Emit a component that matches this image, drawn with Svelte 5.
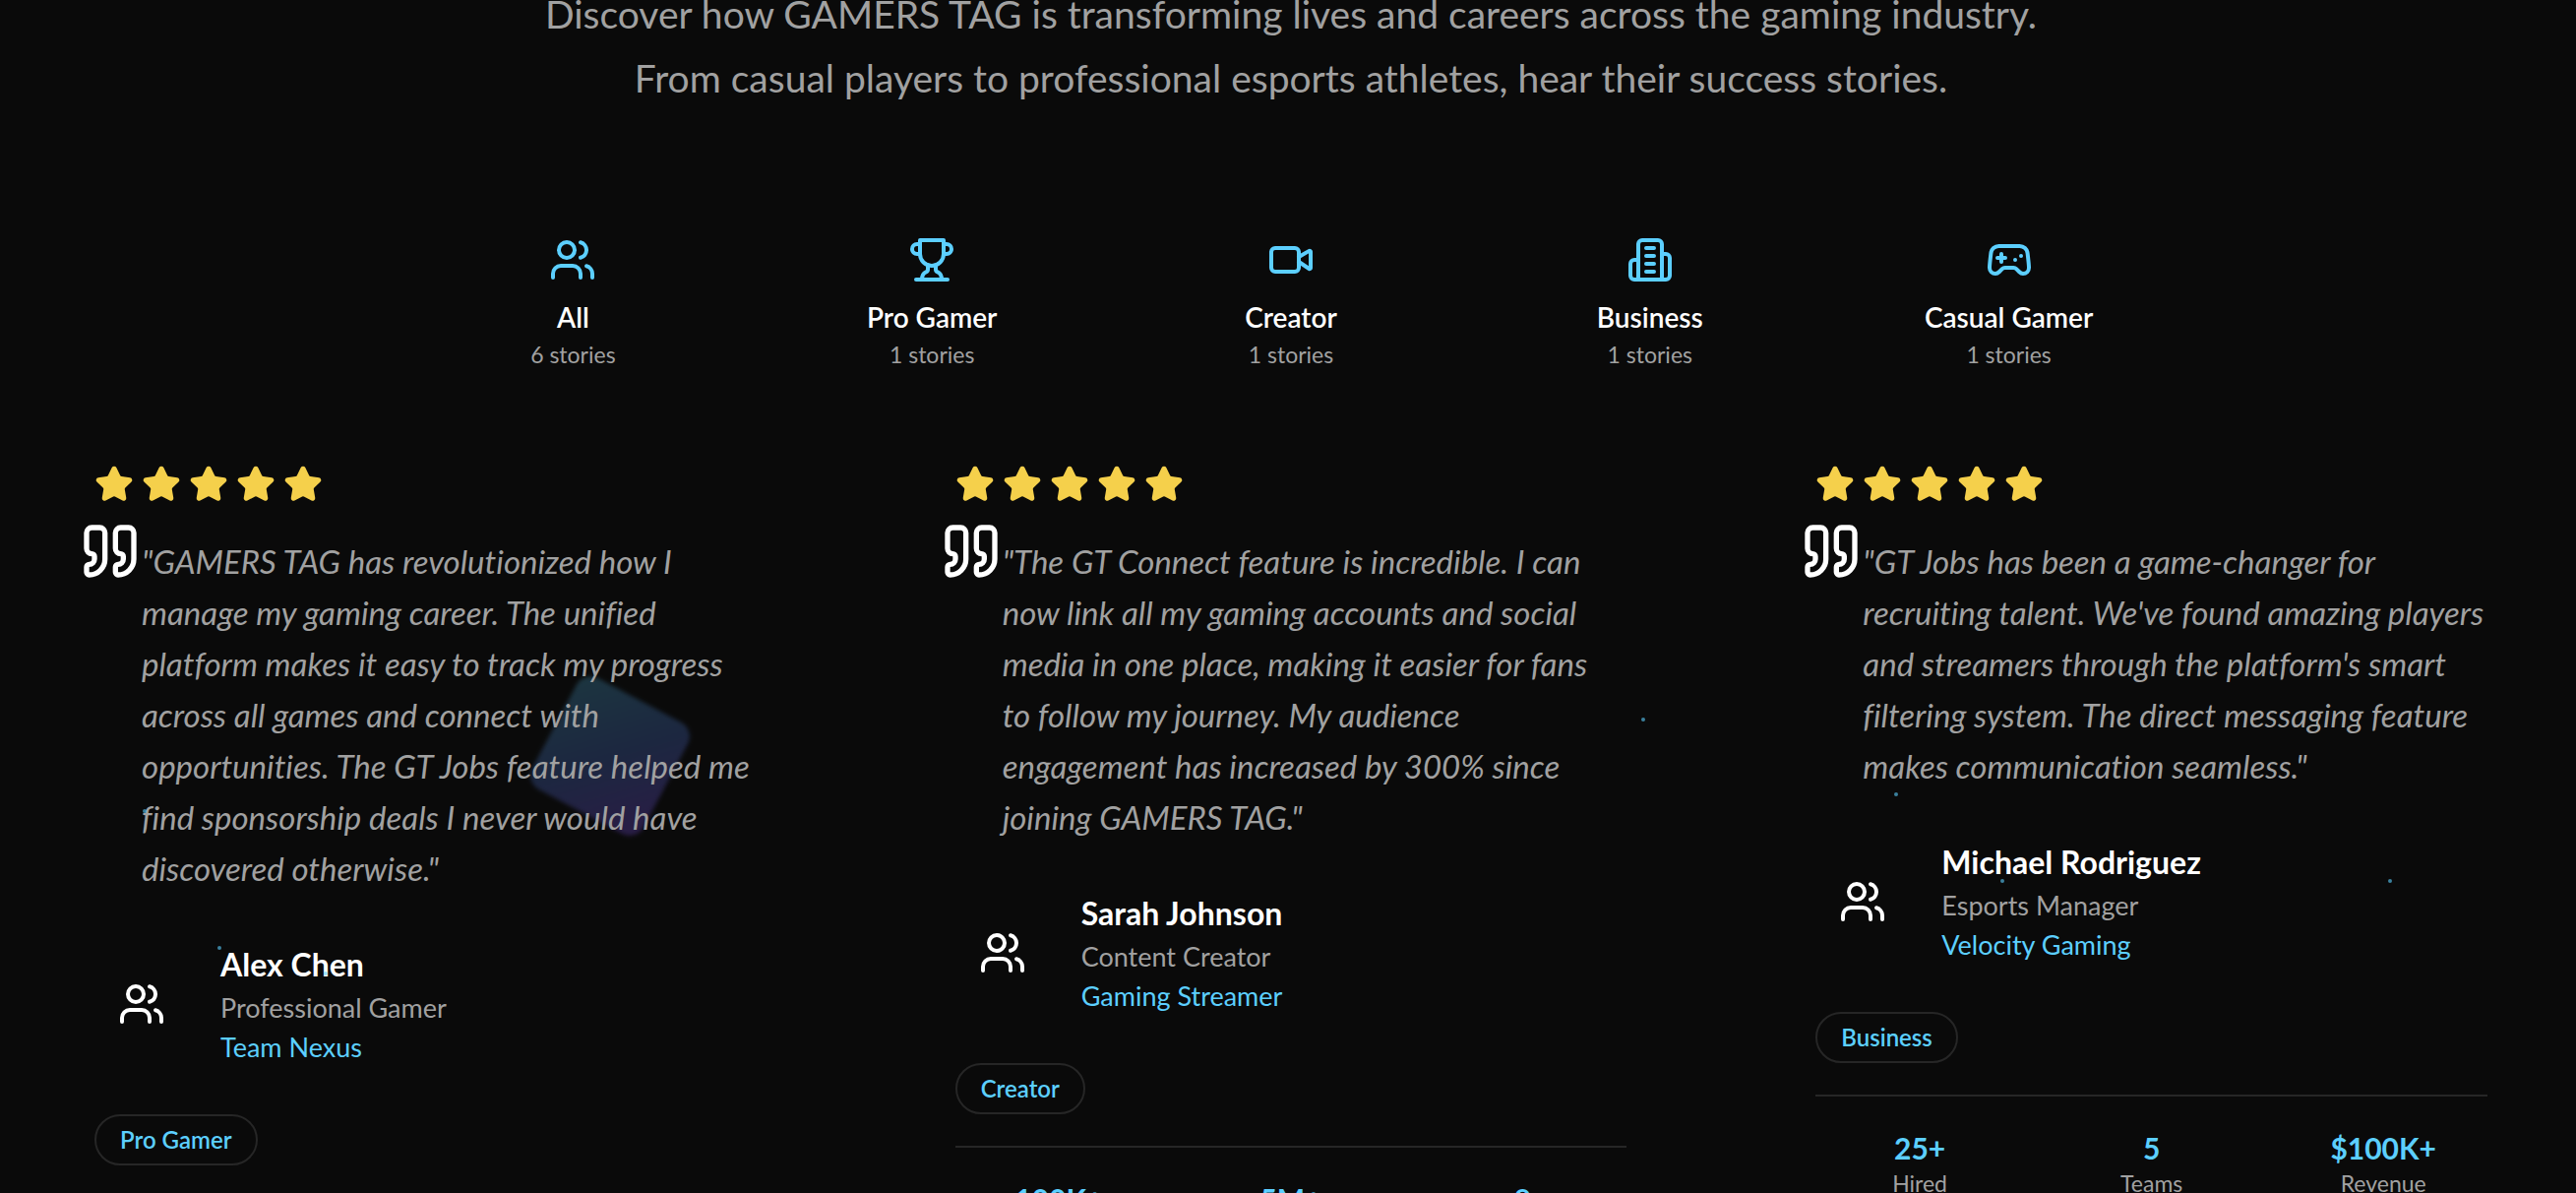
<script>
  const filters = [
    { label: 'All', count: 6, icon: 'users' },
    { label: 'Pro Gamer', count: 1, icon: 'trophy' },
    { label: 'Creator', count: 1, icon: 'video' },
    { label: 'Business', count: 1, icon: 'building' },
    { label: 'Casual Gamer', count: 1, icon: 'gamepad' }
  ];

  const stories = [
    {
      name: 'Alex Chen',
      role: 'Professional Gamer',
      org: 'Team Nexus',
      tag: 'Pro Gamer',
      lines: [
        '"GAMERS TAG has revolutionized how I',
        'manage my gaming career. The unified',
        'platform makes it easy to track my progress',
        'across all games and connect with',
        'opportunities. The GT Jobs feature helped me',
        'find sponsorship deals I never would have',
        'discovered otherwise."'
      ],
      stats: []
    },
    {
      name: 'Sarah Johnson',
      role: 'Content Creator',
      org: 'Gaming Streamer',
      tag: 'Creator',
      lines: [
        '"The GT Connect feature is incredible. I can',
        'now link all my gaming accounts and social',
        'media in one place, making it easier for fans',
        'to follow my journey. My audience',
        'engagement has increased by 300% since',
        'joining GAMERS TAG."'
      ],
      stats: [
        { value: '100K+', label: 'Followers' },
        { value: '5M+', label: 'Views' },
        { value: '8', label: 'Platforms' }
      ]
    },
    {
      name: 'Michael Rodriguez',
      role: 'Esports Manager',
      org: 'Velocity Gaming',
      tag: 'Business',
      lines: [
        '"GT Jobs has been a game-changer for',
        "recruiting talent. We've found amazing players",
        "and streamers through the platform's smart",
        'filtering system. The direct messaging feature',
        'makes communication seamless."'
      ],
      stats: [
        { value: '25+', label: 'Hired' },
        { value: '5', label: 'Teams' },
        { value: '$100K+', label: 'Revenue' }
      ]
    }
  ];

  const particles = [
    { x: 147, y: 824 },
    { x: 223, y: 963 },
    { x: 331, y: 989 },
    { x: 1670, y: 731 },
    { x: 1927, y: 807 },
    { x: 2035, y: 895 },
    { x: 2429, y: 895 }
  ];

  let selected = $state('All');
</script>

{#snippet icon(name)}
  <svg class="icon" viewBox="0 0 24 24" aria-hidden="true">
    {#if name === 'users'}
      <path d="M16 21v-2a4 4 0 0 0-4-4H6a4 4 0 0 0-4 4v2" />
      <circle cx="9" cy="7" r="4" />
      <path d="M22 21v-2a4 4 0 0 0-3-3.87" />
      <path d="M16 3.13a4 4 0 0 1 0 7.75" />
    {:else if name === 'trophy'}
      <path d="M6 9H4.5a2.5 2.5 0 0 1 0-5H6" />
      <path d="M18 9h1.5a2.5 2.5 0 0 0 0-5H18" />
      <path d="M4 22h16" />
      <path d="M10 14.66V17c0 .55-.47.98-.97 1.21C7.85 18.75 7 20.24 7 22" />
      <path d="M14 14.66V17c0 .55.47.98.97 1.21C16.15 18.75 17 20.24 17 22" />
      <path d="M18 2H6v7a6 6 0 0 0 12 0V2Z" />
    {:else if name === 'video'}
      <path d="m16 13 5.223 3.482a.5.5 0 0 0 .777-.416V7.87a.5.5 0 0 0-.752-.432L16 10.5" />
      <rect x="2" y="6" width="14" height="12" rx="2" />
    {:else if name === 'building'}
      <path d="M6 22V4a2 2 0 0 1 2-2h8a2 2 0 0 1 2 2v18Z" />
      <path d="M6 12H4a2 2 0 0 0-2 2v6a2 2 0 0 0 2 2h2" />
      <path d="M18 9h2a2 2 0 0 1 2 2v9a2 2 0 0 1-2 2h-2" />
      <path d="M10 6h4M10 10h4M10 14h4M10 18h4" />
    {:else if name === 'gamepad'}
      <path d="M6 11h4M8 9v4M15 12h.01M18 10h.01" />
      <path d="M17.32 5H6.68a4 4 0 0 0-3.978 3.59c-.006.052-.01.101-.017.152C2.604 9.416 2 14.456 2 16a3 3 0 0 0 3 3c1 0 1.5-.5 2-1l1.414-1.414A2 2 0 0 1 9.828 16h4.344a2 2 0 0 1 1.414.586L17 18c.5.5 1 1 2 1a3 3 0 0 0 3-3c0-1.545-.604-6.584-.685-7.258-.007-.05-.011-.1-.017-.151A4 4 0 0 0 17.32 5z" />
    {:else if name === 'quote'}
      <path d="M16 3a2 2 0 0 0-2 2v6a2 2 0 0 0 2 2 1 1 0 0 1 1 1v1a2 2 0 0 1-2 2 1 1 0 0 0-1 1v2a1 1 0 0 0 1 1 6 6 0 0 0 6-6V5a2 2 0 0 0-2-2z" />
      <path d="M5 3a2 2 0 0 0-2 2v6a2 2 0 0 0 2 2 1 1 0 0 1 1 1v1a2 2 0 0 1-2 2 1 1 0 0 0-1 1v2a1 1 0 0 0 1 1 6 6 0 0 0 6-6V5a2 2 0 0 0-2-2z" />
    {:else if name === 'star'}
      <path d="M11.525 2.295a.53.53 0 0 1 .95 0l2.31 4.679a2.123 2.123 0 0 0 1.595 1.16l5.166.756a.53.53 0 0 1 .294.904l-3.736 3.638a2.123 2.123 0 0 0-.611 1.878l.882 5.14a.53.53 0 0 1-.771.56l-4.618-2.428a2.122 2.122 0 0 0-1.973 0L6.396 21.01a.53.53 0 0 1-.77-.56l.881-5.139a2.122 2.122 0 0 0-.611-1.879L2.16 9.795a.53.53 0 0 1 .294-.906l5.165-.755a2.122 2.122 0 0 0 1.597-1.16z" />
    {/if}
  </svg>
{/snippet}

<main class="page">
  <div class="backdrop" aria-hidden="true">
    <div class="tile"></div>
  </div>

  <div class="container">
    <p class="intro">
      Discover how GAMERS TAG is transforming lives and careers across the gaming industry.<br />
      From casual players to professional esports athletes, hear their success stories.
    </p>

    <div class="filters">
      {#each filters as f}
        <button type="button" class="filter" aria-pressed={selected === f.label} onclick={() => (selected = f.label)}>
          {@render icon(f.icon)}
          <span class="filter-label">{f.label}</span>
          <span class="filter-count">{f.count} stories</span>
        </button>
      {/each}
    </div>

    <div class="stories">
      {#each stories as s}
        <article class="story">
          <div class="stars" role="img" aria-label="5 out of 5 stars">
            {#each Array(5) as _}{@render icon('star')}{/each}
          </div>
          <blockquote class="quote">
            <span class="quote-mark">{@render icon('quote')}</span>
            {#each s.lines as line}<span class="line">{line}</span>{/each}
          </blockquote>
          <div class="author">
            <div class="avatar">{@render icon('users')}</div>
            <div>
              <h3 class="name">{s.name}</h3>
              <p class="role">{s.role}</p>
              <p class="org">{s.org}</p>
            </div>
          </div>
          <span class="tag">{s.tag}</span>
          {#if s.stats.length}
            <dl class="stats">
              {#each s.stats as stat}
                <div class="stat">
                  <dd>{stat.value}</dd>
                  <dt>{stat.label}</dt>
                </div>
              {/each}
            </dl>
          {/if}
        </article>
      {/each}
    </div>
  </div>

  <div class="particles" aria-hidden="true">
    {#each particles as p}
      <i class="particle" style="left: {p.x}px; top: {p.y}px"></i>
    {/each}
  </div>
</main>

<style>
  :global(body) {
    background: #0a0a0a;
  }
  .page {
    position: relative;
    height: 100vh;
    overflow: hidden;
    background: #0a0a0a;
    color: #fff;
    font-family: Lato, "Liberation Sans", sans-serif;
    font-variant-ligatures: none;
  }
  .container {
    position: relative;
    padding: 0 26px 0 32px;
  }
  .icon {
    display: block;
    width: 48px;
    height: 48px;
    fill: none;
    stroke: currentColor;
    stroke-width: 2;
    stroke-linecap: round;
    stroke-linejoin: round;
  }
  .intro {
    margin: -18px 0 0;
    text-align: center;
    font-size: 39px;
    line-height: 65px;
    color: #a1a1a1;
  }
  .filters {
    display: grid;
    grid-template-columns: repeat(5, 1fr);
    gap: 32px;
    max-width: 1792px;
    margin: 96px auto 0;
  }
  .filter {
    display: flex;
    flex-direction: column;
    align-items: center;
    gap: 2px;
    padding: 32px 0;
    border: 0;
    background: none;
    color: #5ccfff;
    font-family: inherit;
    cursor: pointer;
  }
  .filter-label {
    margin-top: 12px;
    font-size: 28px;
    line-height: 40px;
    font-weight: 600;
    color: #fff;
  }
  .filter-count {
    font-size: 23px;
    line-height: 32px;
    color: #a1a1a1;
  }
  .stories {
    display: grid;
    grid-template-columns: repeat(3, 1fr);
    gap: 64px;
    align-items: start;
  }
  .story {
    padding: 64px;
  }
  .stars {
    display: flex;
    gap: 8px;
    color: #f5d04b;
  }
  .stars .icon {
    width: 40px;
    height: 40px;
    fill: currentColor;
  }
  .quote {
    position: relative;
    margin: 32px 0 48px;
    padding-left: 48px;
    font-size: 33px;
    line-height: 52px;
    font-style: italic;
    color: #a1a1a1;
  }
  .quote-mark {
    position: absolute;
    top: -16px;
    left: -16px;
    color: #fff;
  }
  .quote-mark .icon {
    width: 64px;
    height: 64px;
  }
  .line {
    display: block;
    white-space: nowrap;
  }
  .author {
    display: flex;
    align-items: center;
    gap: 32px;
    margin-bottom: 48px;
  }
  .avatar {
    display: grid;
    place-items: center;
    width: 96px;
    height: 96px;
  }
  .name {
    margin: 0;
    font-size: 32px;
    line-height: 48px;
    font-weight: 700;
  }
  .role,
  .org {
    margin: 0;
    font-size: 27px;
    line-height: 40px;
    color: #a1a1a1;
  }
  .org {
    color: #5ccfff;
  }
  .tag {
    display: block;
    width: fit-content;
    padding: 8px 24px;
    border: 2px solid #262626;
    border-radius: 26px;
    font-size: 24px;
    line-height: 32px;
    font-weight: 600;
    color: #5ccfff;
  }
  .stats {
    display: grid;
    grid-template-columns: repeat(3, 1fr);
    gap: 24px;
    margin: 32px 0 0;
    padding-top: 32px;
    border-top: 2px solid #262626;
    text-align: center;
  }
  .stat dd {
    margin: 0;
    font-size: 30px;
    line-height: 40px;
    font-weight: 700;
    color: #5ccfff;
  }
  .stat dt {
    font-size: 23px;
    line-height: 32px;
    color: #a1a1a1;
  }
  .backdrop,
  .particles {
    position: absolute;
    inset: 0;
    pointer-events: none;
  }
  .tile {
    position: absolute;
    left: 556px;
    top: 704px;
    width: 128px;
    height: 128px;
    border-radius: 16px;
    background: linear-gradient(135deg, #1c3640, #1c2740 50%, #2a1c46);
    filter: blur(2px);
    transform: rotate(28deg);
  }
  .particle {
    position: absolute;
    width: 4px;
    height: 4px;
    border-radius: 50%;
    background: #5ccfff;
    opacity: 0.6;
    transform: translate(-50%, -50%);
  }
</style>
